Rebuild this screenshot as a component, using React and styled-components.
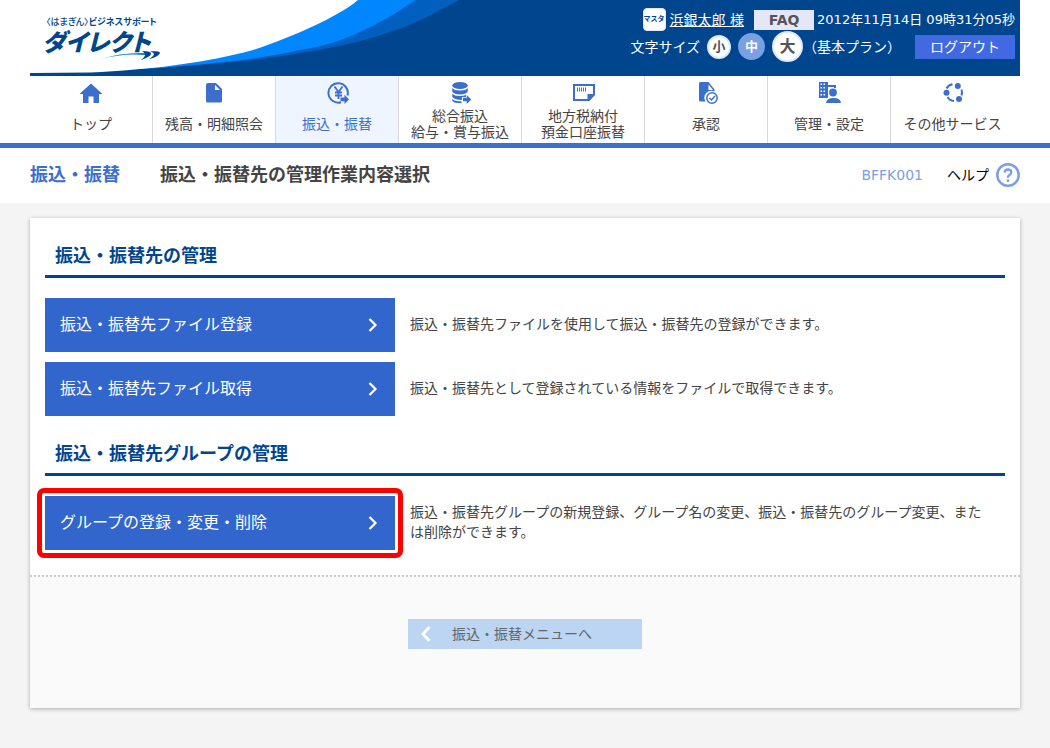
import React from 'react'
import styled, { createGlobalStyle } from 'styled-components'

const ACCENT = '#3c6fcd'

const HomeIcon = () => (
  <svg width="24" height="24" viewBox="0 0 24 24" fill={ACCENT}>
    <path d="M12 2.5 0.500 13H4V22H9.500V15.500H14.500V22H20V13H23.500Z" />
  </svg>
)

const FileIcon = () => (
  <svg width="24" height="24" viewBox="0 0 24 24" fill={ACCENT}>
    <path d="M6 2H14L20 8V20Q20 21.500 18.500 21.500H5.500Q4 21.500 4 20V4Q4 2 6 2Z" />
    <path d="M13 4V9H18Z" fill="#fff" />
  </svg>
)

const YenIcon = () => (
  <svg width="24" height="24" viewBox="-2 0 24 24" fill="none" stroke={ACCENT}>
    <path d="M14 21.200A9.700 9.700 0 1 1 20.500 14.500" strokeWidth="2" />
    <path d="M7.500 5.500 11.500 11 15.500 5.500M11.500 11V18M8 11.500H15M8 14.500H15" strokeWidth="1.800" />
    <path d="M13.500 16.500H17.500V13.800L22 18.500 17.500 23V20.300H13.500Z" fill={ACCENT} stroke="none" />
  </svg>
)

const DatabaseIcon = () => (
  <svg width="24" height="24" viewBox="-1 0 24 24" fill={ACCENT}>
    <ellipse cx="11" cy="4.500" rx="7.800" ry="3.500" />
    <path d="M3.200 7Q5 9.500 11 9.500T18.800 7V10.500Q17 13.500 11 13.500T3.200 10.500Z" />
    <path d="M3.200 12.500Q5 15 11 15T17 13.300V16H13V19Q4.500 18.800 3.200 15.800Z" />
    <path d="M3.200 18Q5 20.300 12.500 20.300V22.300Q4.500 22.300 3.200 19.800Z" />
    <path d="M14 16.800H17.800V14L22.300 18.500 17.800 23V20.300H14Z" />
  </svg>
)

const SlipIcon = () => (
  <svg width="24" height="24" viewBox="-1 0 24 24" fill="none" stroke={ACCENT}>
    <path d="M2 4H22V13.500L17 19H2Z" strokeWidth="2" />
    <path d="M15.500 20V13H23Z" fill={ACCENT} stroke="none" />
    <path d="M5.500 6.500V10.500M7.500 6.500V10.500M9.500 6.500V10.500M11.500 6.500V10.500M13.500 6.500V10.500" strokeWidth="1" />
  </svg>
)

const ApproveIcon = () => (
  <svg width="24" height="24" viewBox="-3 0 24 24" fill={ACCENT}>
    <path d="M3.500 1H11.500L17.500 8.500V10.500A7 7 0 0 0 8.500 20.500H3.500Q2 20.500 2 19V2.500Q2 1 3.500 1Z" />
    <path d="M11.500 3.500V9H16Z" fill="#fff" />
    <circle cx="15" cy="17" r="5.200" fill="#fff" stroke={ACCENT} strokeWidth="1.500" />
    <path d="M12.300 17 14.500 19 18 15" fill="none" stroke={ACCENT} strokeWidth="1.500" />
  </svg>
)

const AdminIcon = () => (
  <svg width="24" height="24" viewBox="0 0 24 24" fill={ACCENT}>
    <path d="M2 1H11V4H19V7H17V6H11V17H2Z" />
    <path
      d="M3.500 2.500H5V4H3.500ZM6.500 2.500H8V4H6.500ZM3.500 6H5V7.500H3.500ZM6.500 6H8V7.500H6.500ZM3.500 9.500H5V11H3.500ZM6.500 9.500H8V11H6.500ZM3.500 13H5V14.500H3.500ZM6.500 13H8V14.500H6.500Z"
      fill="#fff"
    />
    <circle cx="16" cy="11.500" r="3.900" />
    <path d="M9 22Q9.500 17 16.500 17T24 22Z" />
  </svg>
)

const ServicesIcon = () => (
  <svg width="24" height="24" viewBox="0 0 24 24" fill="none" stroke={ACCENT} strokeWidth="2">
    <path d="M5.500 7.500A8.300 8.300 0 0 1 11.500 3.200M20.500 8.500A8.300 8.300 0 0 1 20.500 14.500M13 20A8.300 8.300 0 0 1 6.500 16" />
    <circle cx="16.800" cy="5" r="3" fill={ACCENT} stroke="none" />
    <circle cx="5.500" cy="11.800" r="3" fill={ACCENT} stroke="none" />
    <circle cx="18" cy="18" r="3" fill={ACCENT} stroke="none" />
  </svg>
)

const HelpIcon = () => (
  <svg width="24" height="24" viewBox="0 0 24 24" fill="none" stroke="#7b9fe3">
    <circle cx="12" cy="12" r="10.700" strokeWidth="2.500" />
    <path d="M8.700 9.500Q8.700 6.500 12 6.500T15.300 9.300Q15.300 10.800 13.500 12T12 14.800" strokeWidth="2.300" />
    <circle cx="12" cy="17.700" r="1.400" fill="#7b9fe3" stroke="none" />
  </svg>
)

const Chevron = ({ left }) => (
  <svg width="12" height="16" viewBox="0 0 12 16" fill="none" stroke="#fff" strokeWidth={left ? 2.8 : 2.2}>
    <path d={left ? 'M9.500 1 3 8 9.500 15' : 'M2.500 2 8.500 8 2.500 14'} />
  </svg>
)

const Wave = () => (
  <svg width="440" height="76" viewBox="0 0 440 76">
    <path d="M0 0H440V76H0Z" fill="#00468f" />
    <path d="M0 0H429C405 13 385 24 360 32 325 45 270 54 223 60L130 68 0 73Z" fill="#005fbf" />
    <path d="M0 0H386C368 12 350 23 330 32 310 42 285 48 270 50 230 59 190 63 130 68L0 73Z" fill="#0086ff" />
    <path d="M0 0H328C308 17 262 37 223 50 180 62 120 70 60 72.500L0 73Z" fill="#fff" />
  </svg>
)

const Swoosh = () => (
  <svg width="62" height="12" viewBox="0 0 62 12">
    <path d="M1 9Q22 2 46 3L51 6 44 5Q24 3 1 9Z" fill="#1583cc" />
    <path d="M42 1Q52 1 51 4 50 7 41 10 46 6 45 4 44 2 42 1ZM50 1Q61 1 60 3 58 7 49 9 54 6 54 4 53 2 50 1Z" fill="#00468f" />
  </svg>
)

const menus = [
  { lines: ['トップ'], Icon: HomeIcon },
  { lines: ['残高・明細照会'], Icon: FileIcon },
  { lines: ['振込・振替'], Icon: YenIcon, active: true },
  { lines: ['総合振込', '給与・賞与振込'], Icon: DatabaseIcon },
  { lines: ['地方税納付', '預金口座振替'], Icon: SlipIcon },
  { lines: ['承認'], Icon: ApproveIcon },
  { lines: ['管理・設定'], Icon: AdminIcon },
  { lines: ['その他サービス'], Icon: ServicesIcon },
]

const sections = [
  {
    title: '振込・振替先の管理',
    rows: [
      {
        label: '振込・振替先ファイル登録',
        text: '振込・振替先ファイルを使用して振込・振替先の登録ができます。',
      },
      {
        label: '振込・振替先ファイル取得',
        text: '振込・振替先として登録されている情報をファイルで取得できます。',
      },
    ],
  },
  {
    title: '振込・振替先グループの管理',
    rows: [
      {
        label: 'グループの登録・変更・削除',
        text: '振込・振替先グループの新規登録、グループ名の変更、振込・振替先のグループ変更、または削除ができます。',
        marked: true,
      },
    ],
  },
]

const App = () => {
  return (
    <>
      <GlobalStyle />
      <TopArea>
        <Header>
          <Brand>
            <Wave />
            <Logo href="#">
              <LogoSub>
                <span>〈はまぎん〉</span>ビジネスサポート
              </LogoSub>
              <LogoMain>ダイレクト</LogoMain>
              <LogoMark>
                <Swoosh />
              </LogoMark>
            </Logo>
          </Brand>
          <Tools>
            <ToolRow>
              <Master>マスタ</Master>
              <UserLink href="#">浜銀太郎 様</UserLink>
              <FaqButton>FAQ</FaqButton>
              <Clock>2012年11月14日 09時31分05秒</Clock>
            </ToolRow>
            <ToolRow>
              <span>文字サイズ</span>
              <SizeButton $size={24} $font={13}>
                小
              </SizeButton>
              <SizeButton $size={27} $font={13} $active>
                中
              </SizeButton>
              <SizeButton $size={31} $font={16}>
                大
              </SizeButton>
              <Plan>（基本プラン）</Plan>
              <LogoutButton>ログアウト</LogoutButton>
            </ToolRow>
          </Tools>
        </Header>
        <Nav>
          {menus.map(({ lines, Icon, active }) => (
            <NavItem key={lines[0]} href="#" $active={active}>
              <Icon />
              <NavLabel>
                {lines.map(line => (
                  <span key={line}>{line}</span>
                ))}
              </NavLabel>
            </NavItem>
          ))}
        </Nav>
      </TopArea>
      <TitleBar>
        <Category>振込・振替</Category>
        <PageTitle>振込・振替先の管理作業内容選択</PageTitle>
        <ScreenId>BFFK001</ScreenId>
        <HelpLink href="#">
          ヘルプ
          <HelpIcon />
        </HelpLink>
      </TitleBar>
      <Panel>
        <PanelBody>
          {sections.map(section => (
            <section key={section.title}>
              <SectionTitle>{section.title}</SectionTitle>
              <Rows>
                {section.rows.map(row => (
                  <Row key={row.label}>
                    <MenuButton $marked={row.marked}>
                      {row.label}
                      <Chevron />
                    </MenuButton>
                    <Description>{row.text}</Description>
                  </Row>
                ))}
              </Rows>
            </section>
          ))}
        </PanelBody>
        <PanelFoot>
          <BackButton>
            <Chevron left />
            振込・振替メニューへ
          </BackButton>
        </PanelFoot>
      </Panel>
    </>
  )
}

const GlobalStyle = createGlobalStyle`
  * {
    box-sizing: border-box;
  }
  body {
    margin: 0;
    background: #f4f4f4;
    color: #444;
    font: 14px/20px 'DejaVu Sans', 'Noto Sans CJK JP', sans-serif;
  }
  button {
    border: none;
    padding: 0;
    font: inherit;
    cursor: pointer;
  }
  a {
    color: inherit;
    text-decoration: none;
  }
  svg {
    display: block;
    flex: none;
  }
`

const TopArea = styled.div`
  padding: 0 30px;
  background: #fff;
  border-bottom: 5px solid ${ACCENT};
`

const Header = styled.header`
  display: flex;
  justify-content: space-between;
  height: 76px;
  background: #00468f;
  color: #fff;
`

const Brand = styled.div`
  position: relative;
`

const Logo = styled.a`
  position: absolute;
  top: 15px;
  left: 12px;
  color: #00468f;
  font-family: 'Noto Sans CJK JP', sans-serif;
  font-weight: 700;
  white-space: nowrap;
`

const LogoSub = styled.div`
  display: flex;
  padding-left: 4px;
  font-size: 9px;
  font-feature-settings: 'palt';
  line-height: 14px;

  span {
    font-weight: 500;
  }
`

const LogoMain = styled.div`
  font-size: 24px;
  font-style: italic;
  font-weight: 900;
  font-feature-settings: 'palt';
  line-height: 24px;
`

const LogoMark = styled.div`
  position: absolute;
  top: 35px;
  left: 58px;
`

const Tools = styled.div`
  display: flex;
  flex-direction: column;
  align-items: flex-end;
  padding: 8px 5px 0 0;
`

const ToolRow = styled.div`
  display: flex;
  align-items: center;
  white-space: nowrap;
`

const Master = styled.span`
  width: 23px;
  height: 23px;
  margin-right: 4px;
  border: 1px solid #dfe9f5;
  border-radius: 4px;
  background: #fff;
  color: #00468f;
  font-size: 7px;
  font-weight: 700;
  line-height: 21px;
  text-align: center;
`

const UserLink = styled.a`
  margin-right: 10px;
  text-decoration: underline;
`

const FaqButton = styled.button`
  width: 60px;
  height: 20px;
  margin-right: 3px;
  background: #e6e6fa;
  color: #555;
  font-weight: 700;
`

const Clock = styled.span`
  font-size: 13px;
`

const SizeButton = styled.button`
  display: flex;
  align-items: center;
  justify-content: center;
  width: ${props => props.$size}px;
  height: ${props => props.$size}px;
  margin-left: 7px;
  border: 2px solid ${props => (props.$active ? '#7b9fe3' : '#dfe9fb')};
  border-radius: 50%;
  background: ${props => (props.$active ? '#7b9fe3' : '#fff')};
  color: ${props => (props.$active ? '#fff' : '#555')};
  font-size: ${props => props.$font}px;
  font-weight: 700;
`

const Plan = styled.span`
  margin-right: 14px;
`

const LogoutButton = styled.button`
  width: 100px;
  height: 24px;
  background: #4169e1;
  color: #fff;
`

const Nav = styled.nav`
  display: grid;
  grid-template-columns: repeat(8, 1fr);
  padding-right: 6px;
`

const NavItem = styled.a`
  display: flex;
  flex-direction: column;
  align-items: center;
  height: 67px;
  padding-top: 5px;
  background: ${props => (props.$active ? '#eef5ff' : '#fff')};
  color: ${props => (props.$active ? ACCENT : '#444')};
  border-right: 1px solid #d8d8d8;

  &:last-child {
    border-right: none;
  }
`

const NavLabel = styled.div`
  display: flex;
  flex: 1;
  flex-direction: column;
  justify-content: center;
  line-height: 16px;
  text-align: center;
  white-space: nowrap;
`

const TitleBar = styled.div`
  display: flex;
  align-items: center;
  height: 55px;
  padding: 0 30px 1px;
  background: #fff;
`

const Category = styled.div`
  margin-right: 40px;
  color: ${ACCENT};
  font-size: 18px;
  font-weight: 700;
`

const PageTitle = styled.h1`
  margin: 0 auto 0 0;
  font-size: 18px;
`

const ScreenId = styled.span`
  margin-right: 24px;
  color: #7b9fe3;
`

const HelpLink = styled.a`
  display: flex;
  align-items: center;
  gap: 7px;
  color: #000;
`

const Panel = styled.main`
  margin: 15px 30px 40px;
  background: #fff;
  box-shadow: 0 1px 4px rgba(0, 0, 0, 0.3);
`

const PanelBody = styled.div`
  padding: 23px 15px 25px;

  section + section {
    margin-top: 23px;
  }
`

const SectionTitle = styled.h2`
  margin: 0;
  padding: 0 10px 4px;
  border-bottom: 3px solid #00468f;
  color: #00468f;
  font-size: 18px;
  line-height: 30px;
`

const Rows = styled.div`
  display: grid;
  gap: 10px;
  padding-top: 20px;
`

const Row = styled.div`
  display: flex;
  align-items: center;
  gap: 15px;
`

const MenuButton = styled.button`
  position: relative;
  display: flex;
  flex: none;
  align-items: center;
  justify-content: space-between;
  width: 350px;
  height: 54px;
  padding: 0 16px 0 15px;
  background: #3366cc;
  color: #fff;
  font-size: 16px;

  &::after {
    content: '';
    display: ${props => (props.$marked ? 'block' : 'none')};
    position: absolute;
    inset: -8px;
    border: 5px solid #f00;
    border-radius: 7px;
  }
`

const Description = styled.p`
  margin: 0;
  padding: 0 15px 2px 0;
`

const PanelFoot = styled.div`
  display: flex;
  justify-content: center;
  padding: 42px 0 59px;
  border-top: 2px dotted #ccc;
  background: #fafafa;
`

const BackButton = styled.button`
  display: flex;
  align-items: center;
  gap: 20px;
  width: 234px;
  height: 30px;
  padding-left: 12px;
  background: #bbd5f3;
  color: #666;
`

export default App
